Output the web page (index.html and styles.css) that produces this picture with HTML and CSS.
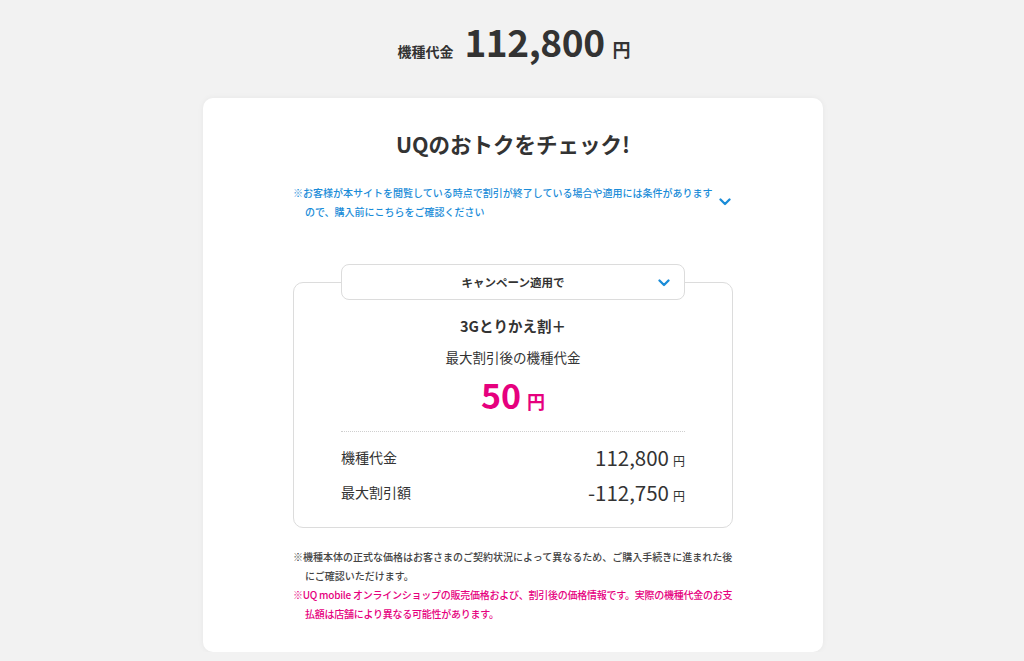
FILE: index.html
```html
<!DOCTYPE html>
<html lang="ja">
<head>
<meta charset="utf-8">
<title>UQのおトクをチェック!</title>
<link rel="stylesheet" href="styles.css">
</head>
<body>
<header class="top">
  <span class="top-label">機種代金</span>
  <span class="top-price">112,800</span>
  <span class="top-yen">円</span>
</header>
<main class="card">
  <h1 class="title">UQのおトクをチェック!</h1>
  <div class="notice">
    <p class="notice-text">※お客様が本サイトを閲覧している時点で割引が終了している場合や適用には条件がありますので、購入前にこちらをご確認ください</p>
    <svg class="chev notice-chev" width="12" height="8" viewBox="0 0 12 8"><polyline points="1.5,1.5 6,6 10.5,1.5" fill="none" stroke="#1a8cd8" stroke-width="2.3" stroke-linecap="round" stroke-linejoin="round"/></svg>
  </div>
  <section class="campaign">
    <div class="pill">
      <span class="pill-text">キャンペーン適用で</span>
      <svg class="chev pill-chev" width="12" height="8" viewBox="0 0 12 8"><polyline points="1.5,1.5 6,6 10.5,1.5" fill="none" stroke="#1a8cd8" stroke-width="2.3" stroke-linecap="round" stroke-linejoin="round"/></svg>
    </div>
    <h2 class="camp-name">3Gとりかえ割＋</h2>
    <p class="camp-sub">最大割引後の機種代金</p>
    <p class="camp-price"><span class="camp-num">50</span><span class="camp-yen">円</span></p>
    <div class="rows">
      <div class="row"><span class="row-label">機種代金</span><span class="row-val"><span class="row-num">112,800</span><span class="row-yen">円</span></span></div>
      <div class="row"><span class="row-label">最大割引額</span><span class="row-val"><span class="row-num">-112,750</span><span class="row-yen">円</span></span></div>
    </div>
  </section>
  <div class="notes">
    <p class="note">※機種本体の正式な価格はお客さまのご契約状況によって異なるため、ご購入手続きに進まれた後にご確認いただけます。</p>
    <p class="note note-pink">※UQ mobile オンラインショップの販売価格および、割引後の価格情報です。実際の機種代金のお支払額は店舗により異なる可能性があります。</p>
  </div>
</main>
</body>
</html>
```
FILE: styles.css
```css
* { box-sizing: border-box; }
html, body { margin: 0; padding: 0; }
body {
  background: #f2f2f2;
  font-family: "Noto Sans CJK JP", "Noto Sans", sans-serif;
  color: #333;
  width: 1024px;
}
p, h1, h2 { margin: 0; }

.top {
  display: flex;
  justify-content: center;
  align-items: baseline;
  height: 98px;
  padding-top: 11px;
  padding-left: 4px;
}
.top-label { font-size: 14px; font-weight: 700; margin-right: 11px; }
.top-price { font-size: 37px; font-weight: 700; line-height: 60px; letter-spacing: -0.4px; margin-right: 8px; }
.top-yen { font-size: 18px; font-weight: 700; }

.card {
  width: 620px;
  margin: 0 0 0 203px;
  background: #fff;
  border-radius: 10px;
  box-shadow: 0 0 6px rgba(0,0,0,0.05);
  padding: 29px 90px 29px 90px;
}
.title {
  text-align: center;
  font-size: 21.5px;
  line-height: 34px;
  font-weight: 700;
}

.notice {
  display: flex;
  align-items: center;
  margin-top: 22px;
}
.notice-text {
  flex: none;
  width: 426px;
  color: #1a8cd8;
  font-size: 10px;
  line-height: 19px;
  font-weight: 500;
  padding-left: 12px;
  text-indent: -12px;
}
.notice-chev { margin-left: auto; margin-right: 3px; flex: none; }

.campaign {
  margin-top: 61px;
  border: 1px solid #dcdcdc;
  border-radius: 10px;
  padding: 0 47px 18px 47px;
}
.pill {
  margin-top: -19px;
  height: 36px;
  background: #fff;
  border: 1px solid #dcdcdc;
  border-radius: 8px;
  display: flex;
  align-items: center;
  justify-content: center;
  position: relative;
}
.pill-text { font-size: 11.5px; font-weight: 700; }
.pill-chev { position: absolute; right: 14px; top: 14px; }

.camp-name {
  text-align: center;
  font-size: 14.5px;
  font-weight: 700;
  line-height: 26px;
  margin-top: 13px;
}
.camp-sub {
  text-align: center;
  font-size: 13.5px;
  line-height: 20px;
  margin-top: 8px;
}
.camp-price {
  text-align: center;
  color: #e6007e;
  font-weight: 700;
  line-height: 40px;
  margin-top: 8px;
  height: 46px;
}
.camp-num { font-size: 34px; margin-right: 6px; }
.camp-yen { font-size: 18px; }

.rows {
  border-top: 1px dotted #cfcfcf;
  margin-top: 10px;
  padding-top: 7px;
}
.row {
  display: flex;
  justify-content: space-between;
  align-items: center;
  height: 35px;
}
.row-label { font-size: 14px; }
.row-val { display: flex; align-items: baseline; }
.row-num { font-size: 20.5px; }
.row-yen { font-size: 12px; margin-left: 4px; }

.notes { margin-top: 19px; }
.note {
  font-size: 10px;
  line-height: 19px;
  font-weight: 500;
  padding-left: 12px;
  text-indent: -12px;
  color: #444;
}
.note-pink { color: #e6007e; letter-spacing: -0.25px; }
```
